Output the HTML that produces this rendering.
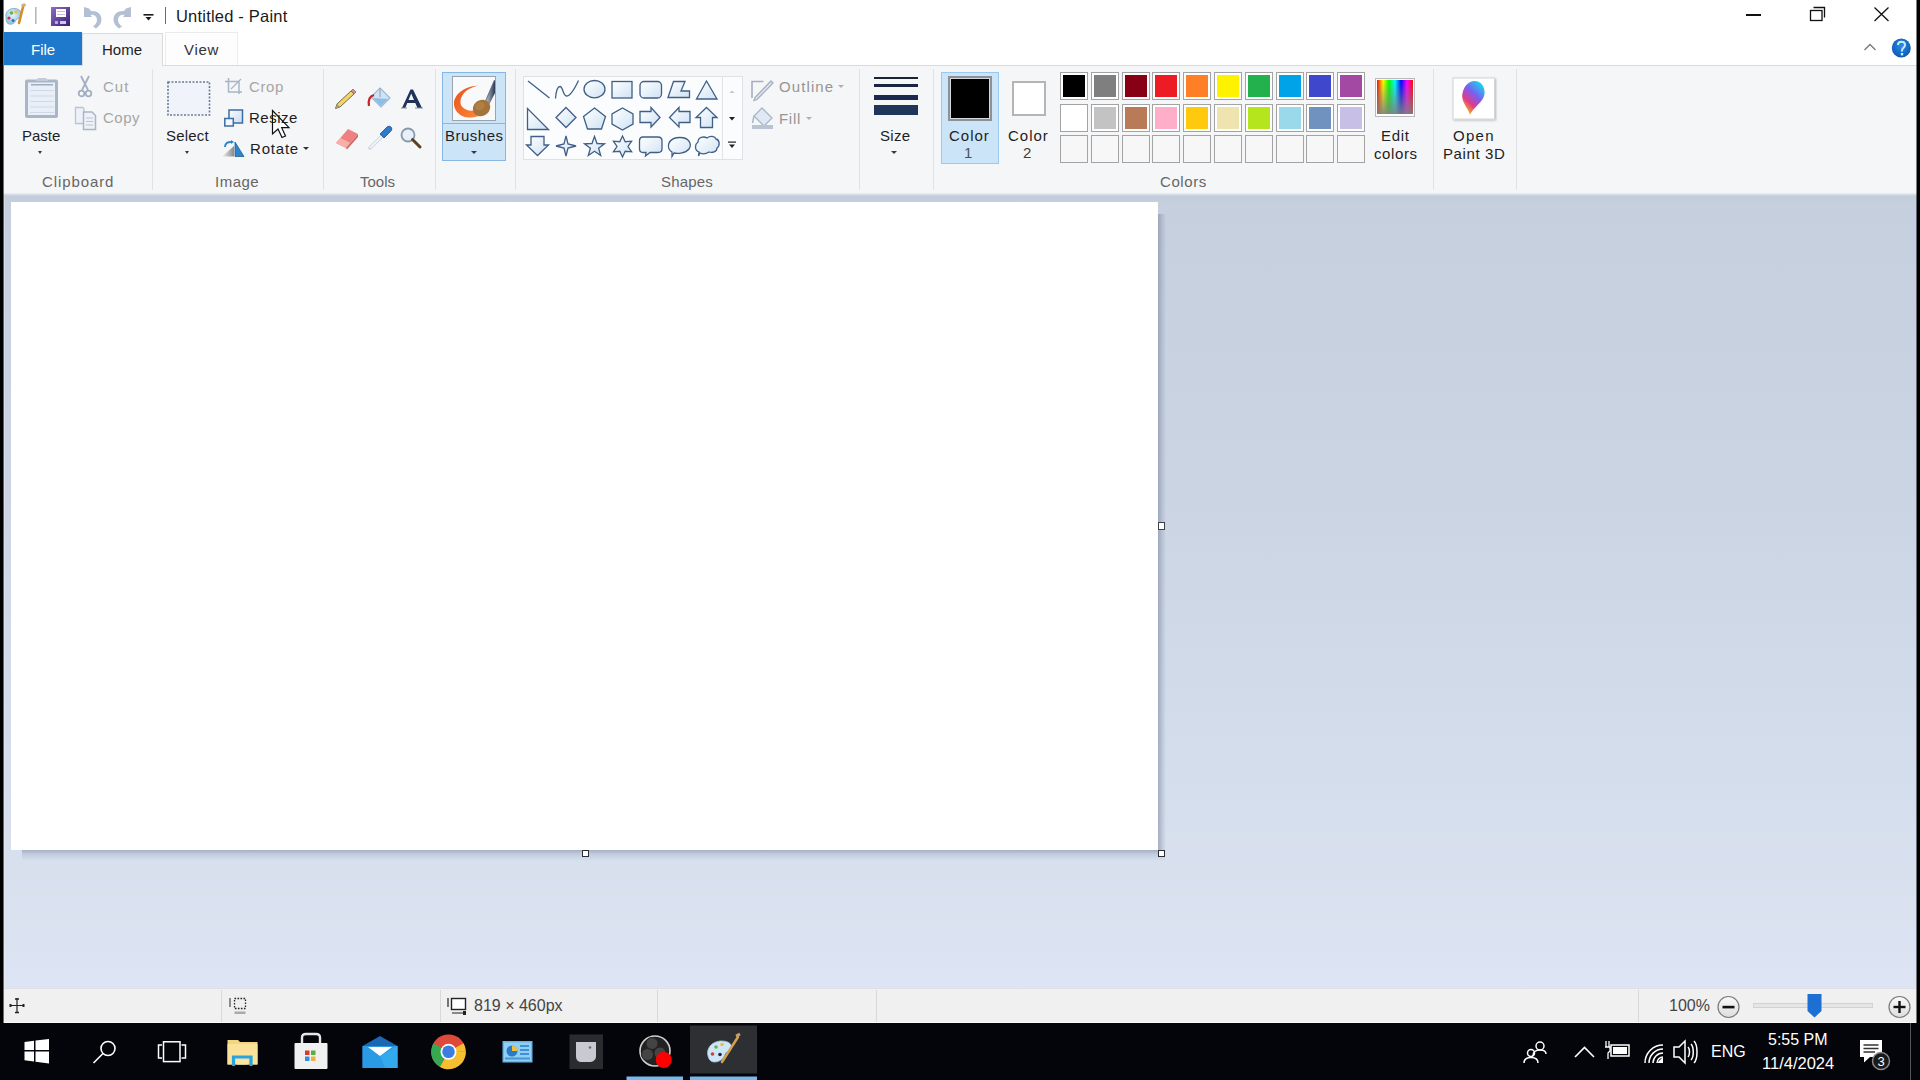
<!DOCTYPE html>
<html><head><meta charset="utf-8">
<style>
*{margin:0;padding:0;box-sizing:border-box}
html,body{width:1920px;height:1080px;overflow:hidden;background:#000;font-family:"Liberation Sans",sans-serif;color:#1e1e1e;position:relative}
.a{position:absolute}
.t{position:absolute;white-space:nowrap;font-size:15px;line-height:17px}
.lbl{color:#666}
.dis{color:#a6a6a6}
.sep{position:absolute;top:69px;width:1px;height:121px;background:#e1e2e4}
.sw{position:absolute;width:28px;height:28px;border:1px solid #a3a3a3;background:#fff}
.sw i{position:absolute;left:2px;top:2px;right:2px;bottom:2px;display:block}
.dd{position:absolute;width:0;height:0;border-left:3px solid transparent;border-right:3px solid transparent;border-top:3px solid #3a3a3a}
svg{position:absolute;overflow:visible}
</style></head><body>
<!-- window frame -->
<div class="a" style="left:3px;top:0;width:1914px;height:32px;background:#fff"></div>
<div class="a" style="left:3px;top:32px;width:1914px;height:33px;background:#fff"></div>
<div class="a" style="left:3px;top:65px;width:1914px;height:128px;background:#f5f6f7;border-top:1px solid #dadbdc"></div>
<div class="a" style="left:3px;top:193px;width:1914px;height:795px;background:linear-gradient(#eef0f4 0px,#c3ccda 3px,#c6cfde 10px,#cbd4e2 300px,#d5deec 600px,#dde4f3 795px)"></div>
<div class="a" style="left:3px;top:988px;width:1914px;height:35px;background:#f0f0f0;border-top:1px solid #dde1e6"></div>
<div class="a" style="left:0;top:1023px;width:1920px;height:57px;background:#04050a"></div>

<div class="a" style="left:4px;top:196px;width:1px;height:792px;background:rgba(255,255,255,.25)"></div>
<div class="a" style="left:4px;top:1022px;width:1913px;height:1px;background:#fafafa"></div>
<!-- canvas -->
<div class="a" style="left:22px;top:850px;width:1143px;height:11px;background:linear-gradient(rgba(120,135,160,.55),rgba(140,155,180,.3) 4px,rgba(160,175,200,0) 11px)"></div>
<div class="a" style="left:1158px;top:214px;width:8px;height:642px;background:linear-gradient(90deg,rgba(110,125,150,.5),rgba(130,145,170,.3) 4px,rgba(160,175,200,0) 8px)"></div>
<div class="a" style="left:11px;top:202px;width:1147px;height:648px;background:#fff"></div>
<div class="a" style="left:1158px;top:522px;width:7px;height:8px;border:1.5px solid #3d4148;background:#fff"></div>
<div class="a" style="left:582px;top:850px;width:7px;height:7px;border:1.5px solid #2a2d33;background:#fff"></div>
<div class="a" style="left:1158px;top:850px;width:7px;height:7px;border:1.5px solid #2a2d33;background:#fff"></div>

<div class="a" style="left:3px;top:0;width:1px;height:1023px;background:rgba(0,0,0,.55)"></div>
<div class="a" style="left:1916px;top:0;width:1px;height:1023px;background:rgba(0,0,0,.5)"></div>
<!-- title bar -->
<div class="t" style="left:176px;top:7px;font-size:16.5px;line-height:19px;letter-spacing:0.2px;color:#1a1a1a">Untitled - Paint</div>


<!-- title bar icons -->
<svg style="left:0;top:0" width="40" height="32" viewBox="0 0 40 32">
  <defs><radialGradient id="pg" cx="0.45" cy="0.4" r="0.6"><stop offset="0" stop-color="#e8f4fb"/><stop offset="1" stop-color="#8fc0e0"/></radialGradient></defs>
  <path d="M6 17 C5 11 10 8 15 8.5 C20 9 22 12 21 16 C20 19 17 18 16 20 C15 23 12 25 9 24 C6 23 6 20 6 17Z" fill="url(#pg)" stroke="#7aaad0" stroke-width="0.8"/>
  <circle cx="9" cy="18" r="1.6" fill="#d03030"/>
  <circle cx="11.5" cy="13" r="1.8" fill="#6ab04c"/>
  <circle cx="16" cy="12" r="1.8" fill="#e8c040"/>
  <circle cx="13" cy="20.5" r="1.5" fill="#3070c0"/>
  <path d="M19 23 L23 7" stroke="#d0902a" stroke-width="2.6" stroke-linecap="round"/>
  <path d="M21.5 6 L24 4.5 L25.5 6" stroke="#d8b080" stroke-width="2.5" fill="none"/>
  <rect x="35" y="7" width="1.6" height="17" fill="#b8b8b8"/>
</svg>
<svg style="left:50px;top:6px" width="22" height="22" viewBox="0 0 22 22">
  <defs><linearGradient id="fl" x1="0" y1="0" x2="1" y2="1"><stop offset="0" stop-color="#8f6cc8"/><stop offset="1" stop-color="#3a1f70"/></linearGradient></defs>
  <rect x="1" y="1" width="19" height="19" fill="url(#fl)"/>
  <rect x="6" y="3" width="10" height="8" fill="#fff"/>
  <rect x="7" y="5" width="8" height="1" fill="#c8c0e0"/><rect x="7" y="8" width="8" height="1" fill="#c8c0e0"/>
  <rect x="5" y="15" width="3" height="3" fill="#b8a8e8"/><rect x="10" y="15" width="6" height="3" fill="#d0c8e8"/>
</svg>
<svg style="left:80px;top:4px" width="60" height="26" viewBox="0 0 60 26">
  <path d="M4 3 L4 13 L12 13 L10.5 11 C14 10 17 12.5 17 16 C17 19 15 21 13 22.5 L16 24.5 C19.5 22 21.5 19 21.5 15.5 C21.5 10 17 6.5 11 7 L9 4.5Z" fill="#b3bfd3"/>
  <path d="M51 3 L51 13 L43 13 L44.5 11 C41 10 38 12.5 38 16 C38 19 40 21 42 22.5 L39 24.5 C35.5 22 33.5 19 33.5 15.5 C33.5 10 38 6.5 44 7 L46 4.5Z" fill="#b3bfd3"/>
</svg>
<svg style="left:140px;top:10px" width="30" height="18" viewBox="0 0 30 18">
  <rect x="3.5" y="4" width="10" height="1.6" fill="#1a1a1a"/>
  <path d="M5.5 7 L11.5 7 L8.5 10.5Z" fill="#1a1a1a"/>
  <rect x="25" y="-3" width="1" height="17" fill="#6a6a6a"/>
</svg>
<!-- window controls -->
<div class="a" style="left:1746px;top:14px;width:15px;height:1.5px;background:#111"></div>
<svg style="left:1805px;top:4px" width="24" height="20" viewBox="0 0 24 20">
  <rect x="5.5" y="6.5" width="11.5" height="10" fill="none" stroke="#111" stroke-width="1.3"/>
  <path d="M8.5 3.5 L19.5 3.5 L19.5 13.5" fill="none" stroke="#111" stroke-width="1.3"/>
</svg>
<svg style="left:1870px;top:4px" width="24" height="20" viewBox="0 0 24 20">
  <path d="M4.5 3.5 L18.5 17 M18.5 3.5 L4.5 17" stroke="#111" stroke-width="1.3"/>
</svg>
<!-- ribbon minimize caret + help -->
<svg style="left:1860px;top:40px" width="60" height="22" viewBox="0 0 60 22">
  <path d="M4.5 10 L10 4.5 L15.5 10" fill="none" stroke="#777" stroke-width="1.3"/>
  <defs><radialGradient id="hg" cx="0.5" cy="0.4" r="0.6"><stop offset="0" stop-color="#2f8ae6"/><stop offset="1" stop-color="#0c58b4"/></radialGradient></defs>
  <circle cx="41.3" cy="8" r="9.5" fill="url(#hg)"/>
  <path d="M38 5 C38 2.5 40 1.8 41.5 1.8 C43.5 1.8 45 3 45 5 C45 7.5 42 8 42 10.5 L42 11.5" fill="none" stroke="#bff0ff" stroke-width="2"/>
  <rect x="40.8" y="13" width="2.4" height="2.4" fill="#bff0ff"/>
</svg>

<!-- tabs -->
<div class="a" style="left:4px;top:32px;width:78px;height:33px;background:#1e79cd"></div>
<div class="t" style="left:31px;top:41px;color:#fff;font-size:15px">File</div>
<div class="a" style="left:82px;top:33px;width:81px;height:33px;background:#f5f6f7;border:1px solid #dadbdc;border-bottom:none"></div>
<div class="t" style="left:102px;top:41px">Home</div>
<div class="a" style="left:165px;top:32px;width:73px;height:33px;background:#fdfdfd;border:1px solid #ebebeb;border-bottom:none"></div>
<div class="t" style="left:184px;top:41px;color:#333;letter-spacing:0.7px">View</div>


<!-- clipboard icons -->
<svg style="left:22px;top:74px" width="40" height="48" viewBox="0 0 40 48">
  <rect x="3" y="5.5" width="33" height="38.5" rx="2" fill="#a9b6c8"/>
  <rect x="6" y="8.5" width="27" height="32.5" fill="#e9eff8"/>
  <rect x="9" y="10" width="22" height="1.5" fill="#a0acbe"/>
  <rect x="8" y="16" width="24" height="1" fill="#cfd8e4"/>
  <rect x="8" y="21.5" width="24" height="1" fill="#cfd8e4"/>
  <rect x="8" y="27" width="24" height="1" fill="#cfd8e4"/>
  <rect x="8" y="32.5" width="24" height="1" fill="#cfd8e4"/>
  <rect x="8" y="38" width="24" height="1" fill="#cfd8e4"/>
  <path d="M14 7 L16 4 L24 4 L26 7Z" fill="#c2ccda"/>
</svg>
<div class="dd" style="left:38px;top:151px;border-left-width:2.5px;border-right-width:2.5px"></div>
<svg style="left:76px;top:74px" width="20" height="26" viewBox="0 0 20 26">
  <path d="M5 2 L12 16 M13 2 L6 16" stroke="#a3afc2" stroke-width="1.8"/>
  <circle cx="5.5" cy="19.5" r="2.8" fill="none" stroke="#a3afc2" stroke-width="1.8"/>
  <circle cx="12.5" cy="19.5" r="2.8" fill="none" stroke="#a3afc2" stroke-width="1.8"/>
</svg>
<svg style="left:74px;top:105px" width="26" height="28" viewBox="0 0 26 28">
  <path d="M1.5 2.5 L9 2.5 L10 4 L10 18.5 L1.5 18.5Z" fill="#eef2f8" stroke="#b9c4d4" stroke-width="1.3"/>
  <path d="M9.5 7 L18 7 L21.5 10.5 L21.5 24.5 L9.5 24.5Z" fill="#eef2f8" stroke="#aab6c8" stroke-width="1.5"/>
  <path d="M12 13 L19 13 M12 16.5 L19 16.5 M12 20 L19 20" stroke="#b9c4d4" stroke-width="1.2"/>
</svg>
<!-- select -->
<svg style="left:165px;top:79px" width="48" height="40" viewBox="0 0 48 40">
  <rect x="3" y="3" width="41.5" height="33" fill="#f0f4fa" stroke="#6a7b98" stroke-width="1.6" stroke-dasharray="2 1.5"/>
</svg>
<div class="dd" style="left:185px;top:151px;border-left-width:2.5px;border-right-width:2.5px"></div>
<!-- crop -->
<svg style="left:222px;top:75px" width="24" height="24" viewBox="0 0 24 24">
  <path d="M3 6.5 L17 6.5 L17 19 M6.5 3 L6.5 17 L20 17" fill="none" stroke="#a9b5c8" stroke-width="1.5"/>
  <path d="M9 14 L19 4" stroke="#a9b5c8" stroke-width="1.2"/>
</svg>
<!-- resize -->
<svg style="left:222px;top:107px" width="24" height="22" viewBox="0 0 24 22">
  <defs><linearGradient id="rz" x1="0" y1="0" x2="1" y2="1"><stop offset="0" stop-color="#fafcff"/><stop offset="1" stop-color="#c8dcf0"/></linearGradient></defs>
  <rect x="7" y="3" width="13.5" height="13" fill="url(#rz)" stroke="#3b6ea5" stroke-width="1.5"/>
  <rect x="2.8" y="11.5" width="8.5" height="7.5" fill="#f4f8fc" stroke="#3b6ea5" stroke-width="1.5"/>
</svg>
<!-- rotate -->
<svg style="left:220px;top:138px" width="28" height="22" viewBox="0 0 28 22">
  <defs><linearGradient id="rt" x1="0" y1="0" x2="1" y2="0"><stop offset="0" stop-color="#f0f0f0"/><stop offset="1" stop-color="#8a8a8a"/></linearGradient></defs>
  <path d="M2 18.5 L14 18.5 L14 8Z" fill="url(#rt)"/>
  <path d="M15 4 L15 18.5 L24 18.5Z" fill="#2e86c8" stroke="#1f5f98" stroke-width="0.8"/>
  <path d="M5 9 C5 5 8 3.5 12 4" fill="none" stroke="#2e86c8" stroke-width="2"/>
  <path d="M11 2 L14 4 L11 6Z" fill="#2e86c8"/>
</svg>
<div class="dd" style="left:303px;top:147px;border-left-width:3px;border-right-width:3px;border-top-width:3.5px;border-top-color:#333"></div>
<!-- cursor -->
<svg style="left:271px;top:109px" width="24" height="32" viewBox="0 0 24 32">
  <path d="M1.5 1.5 L1.5 25 L7 20 L11 28.5 L14.5 27 L10.7 18.7 L18 18.7Z" fill="#fff" stroke="#111" stroke-width="1.2" stroke-linejoin="miter"/>
</svg>
<!-- tools -->
<svg style="left:330px;top:84px" width="100" height="72" viewBox="0 0 100 72">
  <!-- pencil -->
  <path d="M5.5 24.5 L7 20 L21 7 L24 10 L10 23Z" fill="#f1d46a" stroke="#6b5a3a" stroke-width="0.9"/>
  <path d="M5.5 24.5 L7 20 L10 23Z" fill="#a89888"/>
  <path d="M21 7 L23 5 L26 8 L24 10Z" fill="#d09090" stroke="#8a5a5a" stroke-width="0.7"/>
  <!-- bucket -->
  <path d="M50 4 L60 14 L51 23 L41 13Z" fill="#cfe3f6" stroke="#9bb8d8" stroke-width="1.2"/>
  <path d="M43 14 L51 22 L58 15Z" fill="#8ebce6"/>
  <path d="M50 4 L50 13" stroke="#9aa8b8" stroke-width="1.2"/>
  <path d="M39 22 C38 16 40 12 44 11" fill="none" stroke="#c0282a" stroke-width="2.2"/>
  <!-- A -->
  <path d="M72 24 L80.5 5.5 L83 5.5 L92 24 L87.5 24 L85.3 19 L77.3 19 L75.2 24Z M78.5 16 L84 16 L81.2 9.5Z" fill="#1f3358" fill-rule="evenodd"/>
  <path d="M71 24 L77 24 M85 24 L93 24" stroke="#8090a8" stroke-width="1.2"/>
  <!-- eraser -->
  <path d="M6 59 L18 45 L28 50 L16 64Z" fill="#f07f82"/>
  <path d="M6 59 L10.5 54 L20.5 59 L16 64Z" fill="#f7b0a8"/>
  <path d="M16 64 L28 50 L28 53 L17 65.5Z" fill="#d06868"/>
  <!-- picker -->
  <path d="M40 64 L52 52" stroke="#c8d4e0" stroke-width="3.5" stroke-linecap="round"/>
  <path d="M40 64 L52 52" stroke="#eef4fa" stroke-width="1.8"/>
  <path d="M50 50 L57 43 C58 42 60 42 61 43 C62 44 62 46 61 47 L54 54Z" fill="#2f7acb" stroke="#1b4f8c" stroke-width="0.8"/>
  <!-- magnifier -->
  <circle cx="78" cy="51" r="6.5" fill="#e6f0fb" stroke="#8a98a8" stroke-width="1.8"/>
  <path d="M82.5 55.5 L90 63" stroke="#5a4020" stroke-width="3" stroke-linecap="round"/>
</svg>
<!-- ribbon separators -->
<div class="sep" style="left:152px"></div>
<div class="sep" style="left:323px"></div>
<div class="sep" style="left:435px"></div>
<div class="sep" style="left:515px"></div>
<div class="sep" style="left:859px"></div>
<div class="sep" style="left:933px"></div>
<div class="sep" style="left:1433px"></div>
<div class="sep" style="left:1516px"></div>

<!-- group labels -->
<div class="t lbl" style="left:42px;top:173px;letter-spacing:0.9px">Clipboard</div>
<div class="t lbl" style="left:215px;top:173px;letter-spacing:0.5px">Image</div>
<div class="t lbl" style="left:360px;top:173px;letter-spacing:0px">Tools</div>
<div class="t lbl" style="left:661px;top:173px;letter-spacing:0.2px">Shapes</div>
<div class="t lbl" style="left:1160px;top:173px;letter-spacing:0.6px">Colors</div>

<!-- clipboard -->
<div class="t" style="left:22px;top:127px;letter-spacing:0px">Paste</div>

<div class="t dis" style="left:103px;top:78px;letter-spacing:1.0px">Cut</div>
<div class="t dis" style="left:103px;top:109px;letter-spacing:0.5px">Copy</div>

<!-- image -->
<div class="t" style="left:166px;top:127px;letter-spacing:0.2px">Select</div>

<div class="t dis" style="left:249px;top:78px;letter-spacing:0.6px">Crop</div>
<div class="t" style="left:249px;top:109px;letter-spacing:0.5px">Resize</div>
<div class="t" style="left:250px;top:140px;letter-spacing:0.8px">Rotate</div>


<!-- brushes -->
<div class="a" style="left:442px;top:72px;width:64px;height:89px;background:#cce4f7;border:1px solid #86b7e4"></div>
<div class="a" style="left:443px;top:123px;width:62px;height:1px;background:#86b7e4"></div>

<!-- brushes icon -->
<svg style="left:452px;top:76px" width="44" height="45" viewBox="0 0 44 45">
  <defs>
    <linearGradient id="or" x1="0" y1="0" x2="1" y2="1"><stop offset="0" stop-color="#e8501a"/><stop offset="1" stop-color="#ff8a3a"/></linearGradient>
    <linearGradient id="hd" x1="0" y1="0" x2="1" y2="0"><stop offset="0" stop-color="#c8d0dc"/><stop offset="1" stop-color="#2a3850"/></linearGradient>
  </defs>
  <rect x="0.5" y="0.5" width="43" height="44" fill="#f7f9fb" stroke="#9aa3ae" stroke-width="1"/>
  <path d="M26 9.5 C17 10 4 15 2 26 C1 34 8 41.5 17 41.5 C23 41.5 28 40 30.5 38 L27 33 C21 36 13 35 9.5 30 C7 25.5 9 17.5 17 13 C20 11.5 23 10.5 26 9.5Z" fill="url(#or)"/>
  <path d="M33 26 L42.5 4 L43 4.5 L43 17 L37 29Z" fill="url(#hd)"/>
  <path d="M33.5 25 L42.5 4" stroke="#5a6880" stroke-width="0.9"/>
  <ellipse cx="29.5" cy="32" rx="9" ry="8" transform="rotate(-35 29.5 32)" fill="#a5733a"/>
  <ellipse cx="28" cy="30" rx="5" ry="4" transform="rotate(-35 28 30)" fill="#b8874a" opacity="0.6"/>
</svg>

<div class="t" style="left:445px;top:127px;letter-spacing:0.5px">Brushes</div>
<div class="dd" style="left:471px;top:151px"></div>

<!-- shapes gallery -->
<div class="a" style="left:523px;top:76px;width:220px;height:84px;background:#fbfcfd;border:1px solid #dfe1e4"></div>
<div class="a" style="left:722px;top:77px;width:1px;height:82px;background:#e2e4e6"></div>
<div class="t dis" style="left:779px;top:78px;letter-spacing:1.1px;color:#959595">Outline</div>
<div class="dd" style="left:838px;top:85px;border-top-color:#b0b0b0"></div>
<div class="t dis" style="left:779px;top:110px;letter-spacing:0.7px;color:#959595">Fill</div>
<div class="dd" style="left:806px;top:117px;border-top-color:#b0b0b0"></div>


<!-- shapes -->
<svg style="left:522px;top:74px" width="222" height="88" viewBox="0 0 222 88">
  <defs><linearGradient id="sg" x1="0" y1="0" x2="1" y2="1"><stop offset="0" stop-color="#ffffff"/><stop offset="1" stop-color="#cfe2f4"/></linearGradient></defs>
  <path d="M6 7 L27.5 24" stroke="#3f5f86" stroke-width="1.3"/>
  <path d="M33.5 24.5 C34 18 35.5 12.5 38 12.5 C41 12.5 41 22 44.5 22 C49 22 53 14 56.5 6.5" fill="none" stroke="#3f5f86" stroke-width="1.3"/>
  <ellipse cx="72.5" cy="15.2" rx="10.5" ry="8.7" fill="url(#sg)" stroke="#3f5f86" stroke-width="1.3" stroke-linejoin="miter"/>
  <rect x="90" y="7.5" width="20" height="16.5" fill="url(#sg)" stroke="#3f5f86" stroke-width="1.3" stroke-linejoin="miter"/>
  <rect x="118" y="7.5" width="21.5" height="16.5" rx="4" fill="url(#sg)" stroke="#3f5f86" stroke-width="1.3" stroke-linejoin="miter"/>
  <polygon points="146,23.5 151.5,7.5 163,7.5 159,17 167.5,17 167.5,23.5" fill="url(#sg)" stroke="#3f5f86" stroke-width="1.3" stroke-linejoin="miter"/>
  <polygon points="184.5,7 174.5,25 195,25" fill="url(#sg)" stroke="#3f5f86" stroke-width="1.3" stroke-linejoin="miter"/>

  <polygon points="5.5,34.5 5.5,55.5 26.5,55.5" fill="url(#sg)" stroke="#3f5f86" stroke-width="1.3" stroke-linejoin="miter"/>
  <polygon points="44,33.5 54,43.5 44,53.5 34,43.5" fill="url(#sg)" stroke="#3f5f86" stroke-width="1.3" stroke-linejoin="miter"/>
  <polygon points="72.5,34 83.5,42.5 79.5,55 65.5,55 61.5,42.5" fill="url(#sg)" stroke="#3f5f86" stroke-width="1.3" stroke-linejoin="miter"/>
  <polygon points="100.5,34 111,40 111,50 100.5,56 90,50 90,40" fill="url(#sg)" stroke="#3f5f86" stroke-width="1.3" stroke-linejoin="miter"/>
  <polygon points="118,37.5 129,37.5 129,33.5 138,43.5 129,53 129,48.5 118,48.5" fill="url(#sg)" stroke="#3f5f86" stroke-width="1.3" stroke-linejoin="miter"/>
  <polygon points="168,37.5 157,37.5 157,33.5 147.5,43.5 157,53 157,48.5 168,48.5" fill="url(#sg)" stroke="#3f5f86" stroke-width="1.3" stroke-linejoin="miter"/>
  <polygon points="184.5,33.5 195,43.5 190.5,43.5 190.5,53.5 178.5,53.5 178.5,43.5 174,43.5" fill="url(#sg)" stroke="#3f5f86" stroke-width="1.3" stroke-linejoin="miter"/>

  <polygon points="9,62.5 22,62.5 22,71 26.5,71 15.5,81.5 4.5,71 9,71" fill="url(#sg)" stroke="#3f5f86" stroke-width="1.3" stroke-linejoin="miter"/>
  <polygon points="44.0,62.0 46.0,70.0 54.0,72.0 46.0,74.0 44.0,82.0 42.0,74.0 34.0,72.0 42.0,70.0" fill="url(#sg)" stroke="#3f5f86" stroke-width="1.3" stroke-linejoin="miter"/>
  <polygon points="72.5,62.5 75.0,69.5 82.5,69.8 76.6,74.3 78.7,81.5 72.5,77.3 66.3,81.5 68.4,74.3 62.5,69.8 70.0,69.5" fill="url(#sg)" stroke="#3f5f86" stroke-width="1.3" stroke-linejoin="miter"/>
  <polygon points="100.5,62.0 103.2,67.7 109.6,67.2 106.0,72.5 109.6,77.8 103.2,77.3 100.5,83.0 97.8,77.3 91.4,77.8 95.0,72.5 91.4,67.2 97.8,67.7" fill="url(#sg)" stroke="#3f5f86" stroke-width="1.3" stroke-linejoin="miter"/>
  <path d="M121 63 L136 63 Q140 63 140 67 L140 74.5 Q140 78.5 136 78.5 L128 78.5 L123.5 82 L124 78.5 L121 78.5 Q117.5 78.5 117.5 74.5 L117.5 67 Q117.5 63 121 63Z" fill="url(#sg)" stroke="#3f5f86" stroke-width="1.3" stroke-linejoin="miter"/>
  <path d="M150 78 C144 75 145 64 157 63.5 C168 63 170 71 167 75 C164 79 156 80 152 79 L150 82.5Z" fill="url(#sg)" stroke="#3f5f86" stroke-width="1.3" stroke-linejoin="miter"/>
  <path d="M177 78 C172 76 173 70 176 68 C176 63 182 62 185 64 C188 61.5 193 62 194 65 C198 66 198 72 195 74 C195 78 190 79 187 78 C184 80 180 80 178 79 L176.5 82Z" fill="url(#sg)" stroke="#3f5f86" stroke-width="1.3" stroke-linejoin="miter"/>

  <path d="M207.5 19 L210 16.5 L212.5 19Z" fill="#c0c4c8"/>
  <path d="M207 43 L213 43 L210 46.5Z" fill="#222"/>
  <rect x="206" y="67.5" width="8" height="1.2" fill="#222"/>
  <path d="M207 70.5 L213 70.5 L210 74Z" fill="#222"/>
</svg>
<!-- outline / fill icons -->
<svg style="left:748px;top:76px" width="30" height="56" viewBox="0 0 30 56">
  <path d="M15.5 5.5 L4 5.5 L4 22" fill="none" stroke="#a6afbf" stroke-width="1.6"/>
  <path d="M7 21.5 L23 5 L25 7 L9 23.5 L6 24.5Z" fill="#dde6f2" stroke="#a6afbf" stroke-width="1.3"/>
  <path d="M14 32 L24 42 L16 50 L6 40Z" fill="#dfe9f6" stroke="#aab6c8" stroke-width="1.3"/>
  <path d="M6 40 L4.5 47" stroke="#aab6c8" stroke-width="1.5"/>
  <rect x="4" y="49" width="21" height="4" fill="#b8c3d4"/>
</svg>

<!-- size -->
<div class="a" style="left:874px;top:77px;width:44px;height:2px;background:#1b2433"></div>
<div class="a" style="left:874px;top:84px;width:44px;height:3px;background:#1b2540"></div>
<div class="a" style="left:874px;top:95px;width:44px;height:5px;background:#1b2a4c"></div>
<div class="a" style="left:874px;top:105px;width:44px;height:10px;background:#1f3559"></div>
<div class="t" style="left:880px;top:127px;letter-spacing:0.3px">Size</div>
<div class="dd" style="left:891px;top:151px"></div>

<!-- color1/2 -->
<div class="a" style="left:941px;top:72px;width:58px;height:92px;background:#cce4f7;border:1px solid #99c9ef"></div>
<div class="a" style="left:948px;top:76px;width:44px;height:45px;border:2px solid #8c9197;background:#d4d8dc"></div>
<div class="a" style="left:951px;top:79px;width:38px;height:39px;background:#000"></div>
<div class="t" style="left:949px;top:127px;letter-spacing:1.0px">Color</div>
<div class="t" style="left:964px;top:144px;color:#505050">1</div>
<div class="a" style="left:1012px;top:81px;width:34px;height:35px;border:2px solid #b5b5b5;background:#fff"></div>
<div class="t" style="left:1008px;top:127px;letter-spacing:1.0px">Color</div>
<div class="t" style="left:1023px;top:144px;color:#404040">2</div>

<div class="sw" style="left:1060px;top:72px"><i style="background:#000000"></i></div>
<div class="sw" style="left:1091px;top:72px"><i style="background:#7f7f7f"></i></div>
<div class="sw" style="left:1122px;top:72px"><i style="background:#880015"></i></div>
<div class="sw" style="left:1152px;top:72px"><i style="background:#ed1c24"></i></div>
<div class="sw" style="left:1183px;top:72px"><i style="background:#ff7f27"></i></div>
<div class="sw" style="left:1214px;top:72px"><i style="background:#fff200"></i></div>
<div class="sw" style="left:1245px;top:72px"><i style="background:#22b14c"></i></div>
<div class="sw" style="left:1276px;top:72px"><i style="background:#00a2e8"></i></div>
<div class="sw" style="left:1306px;top:72px"><i style="background:#3f48cc"></i></div>
<div class="sw" style="left:1337px;top:72px"><i style="background:#a349a4"></i></div>
<div class="sw" style="left:1060px;top:104px"><i style="background:#ffffff"></i></div>
<div class="sw" style="left:1091px;top:104px"><i style="background:#c3c3c3"></i></div>
<div class="sw" style="left:1122px;top:104px"><i style="background:#b97a57"></i></div>
<div class="sw" style="left:1152px;top:104px"><i style="background:#ffaec9"></i></div>
<div class="sw" style="left:1183px;top:104px"><i style="background:#ffc90e"></i></div>
<div class="sw" style="left:1214px;top:104px"><i style="background:#efe4b0"></i></div>
<div class="sw" style="left:1245px;top:104px"><i style="background:#b5e61d"></i></div>
<div class="sw" style="left:1276px;top:104px"><i style="background:#99d9ea"></i></div>
<div class="sw" style="left:1306px;top:104px"><i style="background:#7092be"></i></div>
<div class="sw" style="left:1337px;top:104px"><i style="background:#c8bfe7"></i></div>
<div class="sw" style="left:1060px;top:135px;background:#f7f7f8"></div>
<div class="sw" style="left:1091px;top:135px;background:#f7f7f8"></div>
<div class="sw" style="left:1122px;top:135px;background:#f7f7f8"></div>
<div class="sw" style="left:1152px;top:135px;background:#f7f7f8"></div>
<div class="sw" style="left:1183px;top:135px;background:#f7f7f8"></div>
<div class="sw" style="left:1214px;top:135px;background:#f7f7f8"></div>
<div class="sw" style="left:1245px;top:135px;background:#f7f7f8"></div>
<div class="sw" style="left:1276px;top:135px;background:#f7f7f8"></div>
<div class="sw" style="left:1306px;top:135px;background:#f7f7f8"></div>
<div class="sw" style="left:1337px;top:135px;background:#f7f7f8"></div>

<!-- edit colors -->
<div class="a" style="left:1375px;top:78px;width:40px;height:39px;border:1px solid #b9b9b9;background:#fff"></div>
<div class="a" style="left:1377px;top:80px;width:36px;height:34px;background:linear-gradient(rgba(128,128,128,0),rgba(128,128,128,.9)),linear-gradient(90deg,#f00,#ff0 17%,#0f0 33%,#0ff 50%,#00f 67%,#f0f 83%,#f00)"></div>
<div class="t" style="left:1381px;top:127px;letter-spacing:0.7px">Edit</div>
<div class="t" style="left:1374px;top:145px;letter-spacing:0.6px">colors</div>

<!-- paint 3d -->

<svg style="left:1452px;top:77px" width="46" height="46" viewBox="0 0 46 46">
  <defs>
    <linearGradient id="p3" x1="0.8" y1="0.1" x2="0.3" y2="0.9"><stop offset="0" stop-color="#22c8f0"/><stop offset="0.4" stop-color="#7a5ef0"/><stop offset="0.75" stop-color="#e03a8a"/><stop offset="1" stop-color="#f09a30"/></linearGradient>
    <filter id="sh" x="-10%" y="-10%" width="130%" height="130%"><feDropShadow dx="1" dy="1" stdDeviation="0.8" flood-color="#000" flood-opacity="0.25"/></filter>
  </defs>
  <rect x="1" y="1" width="41.5" height="41" fill="#fff" stroke="#d4d4d4" stroke-width="1" filter="url(#sh)"/>
  <path d="M18 38 C17 33 12 28 10.5 22 C9 15 13.5 5 21.5 4 C29 3.5 33.5 10 32.5 17 C31.5 24 25 28 21 33 C19.5 35 18.5 36.5 18 38Z" fill="url(#p3)"/>
</svg>

<div class="t" style="left:1453px;top:127px;letter-spacing:1.3px">Open</div>
<div class="t" style="left:1443px;top:145px;letter-spacing:0.6px">Paint 3D</div>

<!-- status bar -->
<div class="a" style="left:221px;top:990px;width:1px;height:32px;background:#d9d9d9"></div>
<div class="a" style="left:440px;top:990px;width:1px;height:32px;background:#d9d9d9"></div>
<div class="a" style="left:657px;top:990px;width:1px;height:32px;background:#d9d9d9"></div>
<div class="a" style="left:876px;top:990px;width:1px;height:32px;background:#d9d9d9"></div>
<div class="a" style="left:1638px;top:990px;width:1px;height:32px;background:#d9d9d9"></div>
<div class="t" style="left:474px;top:997px;font-size:16px;line-height:18px;color:#444">819 × 460px</div>
<div class="t" style="left:1669px;top:997px;font-size:16px;line-height:18px;color:#444">100%</div>


<!-- status bar icons -->
<svg style="left:6px;top:995px" width="24" height="22" viewBox="0 0 24 22">
  <path d="M11 3 L11 18 M4 10.5 L18 10.5" stroke="#222" stroke-width="1.2"/>
  <path d="M9 4 L13 4 M9 17.5 L13 17.5" stroke="#222" stroke-width="1.5"/>
  <rect x="3.5" y="9" width="2" height="3" fill="#222"/><rect x="16.5" y="9" width="2" height="3" fill="#222"/>
</svg>
<svg style="left:226px;top:994px" width="26" height="24" viewBox="0 0 26 24">
  <path d="M4 4 L4 13" stroke="#555" stroke-width="1.3"/>
  <rect x="8.5" y="4.5" width="11" height="10" fill="none" stroke="#222" stroke-width="1.3" stroke-dasharray="1.6 1.4"/>
  <rect x="8.5" y="17.5" width="11" height="2.5" fill="#aaa"/>
</svg>
<svg style="left:444px;top:995px" width="26" height="24" viewBox="0 0 26 24">
  <path d="M4 3 L4 12" stroke="#333" stroke-width="1.3"/>
  <rect x="7.5" y="3.5" width="14" height="11" fill="#fff" stroke="#222" stroke-width="1.4"/>
  <rect x="8" y="17" width="14" height="2" fill="#888"/><rect x="19" y="16" width="3" height="4" fill="#222"/>
</svg>
<!-- zoom control -->
<svg style="left:1710px;top:990px" width="210" height="34" viewBox="0 0 210 34">
  <defs><linearGradient id="zc" x1="0" y1="0" x2="0" y2="1"><stop offset="0" stop-color="#fafafa"/><stop offset="1" stop-color="#dcdcdc"/></linearGradient></defs>
  <circle cx="18.5" cy="17" r="10.5" fill="url(#zc)" stroke="#7a7a7a" stroke-width="1.2"/>
  <rect x="12.5" y="15.8" width="12" height="2.6" fill="#111"/>
  <rect x="43.5" y="13.5" width="119" height="4" fill="#e6e6e6" stroke="#d2d2d2" stroke-width="1"/>
  <path d="M97.5 4 L111.5 4 L111.5 21 L104.5 27.5 L97.5 21Z" fill="#1d6fd4"/>
  <circle cx="189.5" cy="17" r="10.5" fill="url(#zc)" stroke="#7a7a7a" stroke-width="1.2"/>
  <rect x="183.5" y="15.8" width="12" height="2.4" fill="#111"/>
  <rect x="188.3" y="11" width="2.4" height="12" fill="#111"/>
</svg>

<!-- taskbar icons -->
<svg style="left:0;top:1023px" width="800" height="57" viewBox="0 0 800 57">
  <!-- windows logo -->
  <path d="M24.5 19 L34 17.8 L34 27 L24.5 27Z M35.5 17.6 L49 16 L49 27 L35.5 27Z M24.5 28.5 L34 28.5 L34 38.5 L24.5 37.3Z M35.5 28.5 L49 28.5 L49 40.5 L35.5 38.7Z" fill="#fff"/>
  <!-- search -->
  <circle cx="108" cy="25.5" r="7" fill="none" stroke="#fff" stroke-width="1.6"/>
  <path d="M103 30.5 L93.5 40" stroke="#fff" stroke-width="1.6"/>
  <!-- task view -->
  <rect x="163.5" y="18.8" width="16.5" height="19.8" fill="none" stroke="#fff" stroke-width="1.5"/>
  <path d="M162 22 L158.5 22 L158.5 35 L162 35 M181.5 22 L185.5 22 L185.5 35 L181.5 35" fill="none" stroke="#fff" stroke-width="1.5"/>
  <!-- explorer -->
  <path d="M227.5 17 L238 17 L240 19 L257.5 19 L257.5 41.5 L227.5 41.5Z" fill="#f3d57a"/>
  <rect x="227.5" y="21" width="30" height="20.5" fill="#fbe29a"/>
  <path d="M233.5 43 L233.5 34 L251 34 L251 43" fill="none" stroke="#2ba3e0" stroke-width="3.2"/>
  <rect x="237" y="37" width="10.5" height="4.5" fill="#f7e7a8"/>
  <!-- store -->
  <path d="M302 20 L302 14.5 C302 12 304 11 306 11 L316 11 C318 11 320 12 320 14.5 L320 20" fill="none" stroke="#e6e6e6" stroke-width="2.4"/>
  <rect x="294.5" y="20" width="33" height="26" rx="1" fill="#f0f0f0"/>
  <rect x="305" y="27.5" width="4.5" height="4.5" fill="#d83a2a"/><rect x="311" y="27.5" width="4.5" height="4.5" fill="#5aac40"/>
  <rect x="305" y="33.5" width="4.5" height="4.5" fill="#2e90dc"/><rect x="311" y="33.5" width="4.5" height="4.5" fill="#ecb33a"/>
  <!-- mail -->
  <path d="M362.5 23 L380 13 L397.5 23 L397.5 45 L362.5 45Z" fill="#1a67b4"/>
  <path d="M362.5 23 L397.5 23 L397.5 45 L362.5 45Z" fill="#2a9ae4"/>
  <path d="M368 24 L392 24 L380 33Z" fill="#fff"/>
  <path d="M380 33 L397.5 23 L397.5 45 L385 45Z" fill="#38b0f0" opacity="0.7"/>
  <!-- chrome -->
  <circle cx="448.5" cy="28.8" r="17.3" fill="#de4a3a"/>
  <path d="M448.5 28.8 L433.5 20.2 A17.3 17.3 0 0 0 440 44 Z" fill="#36a852"/>
  <path d="M448.5 28.8 L440 44 A17.3 17.3 0 0 0 465.8 28.8 L457 28.8Z" fill="#f5c030"/>
  <path d="M448.5 28.8 L463.5 20.2 A17.3 17.3 0 0 1 465.8 28.8Z" fill="#f5c030"/>
  <circle cx="448.5" cy="28.8" r="8" fill="#fff"/>
  <circle cx="448.5" cy="28.8" r="6.3" fill="#3b7de0"/>
  <!-- control panel -->
  <rect x="502.5" y="18" width="30" height="21.5" fill="#62b8ea"/>
  <rect x="504" y="19.5" width="27" height="18.5" fill="#8fd0f4"/>
  <circle cx="512" cy="28" r="5.5" fill="#2a7ac8"/><path d="M512 28 L512 22.5 A5.5 5.5 0 0 1 517.5 28Z" fill="#f0c040"/>
  <path d="M520 23 L529 23 M520 27 L529 27 M520 31 L529 31" stroke="#2a7ac8" stroke-width="1.5"/>
  <rect x="505" y="34.5" width="25" height="2" fill="#2a7ac8" opacity=".7"/>
  <!-- grey app -->
  <rect x="569.5" y="11.5" width="33.5" height="34.5" fill="#2a2b2f"/>
  <path d="M576 19 L596 19 L596 33 C596 37 593 39 589 39 L582 39 C578 39 576 37 576 33Z" fill="#c9c9d2"/>
  <circle cx="590" cy="24.5" r="1.3" fill="#6a6a74"/>
  <!-- obs -->
  <circle cx="655" cy="28" r="15" fill="#222" stroke="#d0d0d0" stroke-width="1.6"/>
  <circle cx="652" cy="20.5" r="6" fill="#444" stroke="#222" stroke-width="1"/>
  <circle cx="647.5" cy="31.5" r="6" fill="#444" stroke="#222" stroke-width="1"/>
  <circle cx="660" cy="30" r="6" fill="#444" stroke="#222" stroke-width="1"/>
  <circle cx="663.8" cy="37" r="8" fill="#ff0000"/>
  <rect x="626.5" y="53.5" width="56.5" height="3.5" fill="#76b9ed"/>
  <!-- paint active -->
  <rect x="690" y="2.5" width="67" height="48" fill="#2e2f33"/>
  <rect x="690" y="53.5" width="67" height="3.5" fill="#76b9ed"/>
  <path d="M708 33 C706 26 711 19 720 18 C728 17.5 733 21 731 26 C730 29 726 28 725 31 C724 35 720 39 715 39 C711 39 709 37 708 33Z" fill="#cfe6f6" stroke="#9cc4e0" stroke-width="0.8"/>
  <circle cx="712.5" cy="31" r="1.8" fill="#d04030"/>
  <circle cx="716" cy="24" r="1.8" fill="#6ab04c"/>
  <circle cx="722" cy="21.5" r="1.8" fill="#e8c040"/>
  <circle cx="720" cy="31.5" r="1.8" fill="#1a2a40"/>
  <path d="M722 39 L738 14" stroke="#d4a050" stroke-width="2.5" stroke-linecap="round"/>
  <path d="M736 13 L740 11" stroke="#c8a070" stroke-width="3"/>
</svg>
<svg style="left:1500px;top:1023px" width="420" height="57" viewBox="0 0 420 57">
  <!-- people -->
  <circle cx="40" cy="23" r="4" fill="none" stroke="#fff" stroke-width="1.5"/>
  <path d="M33 33 C33 28 36 27 40 27 C44 27 46 28 46 31" fill="none" stroke="#fff" stroke-width="1.5"/>
  <circle cx="31" cy="30" r="3.5" fill="none" stroke="#fff" stroke-width="1.5"/>
  <path d="M24 40 C24 36 27 34.5 31 34.5 C35 34.5 38 36 38 40" fill="none" stroke="#fff" stroke-width="1.5"/>
  <!-- caret -->
  <path d="M75 34 L84.5 24.5 L94 34" fill="none" stroke="#fff" stroke-width="1.6"/>
  <!-- power -->
  <rect x="111" y="22" width="18" height="11" fill="none" stroke="#fff" stroke-width="1.5"/>
  <rect x="113" y="24" width="14" height="7" fill="#fff"/>
  <path d="M106 18 L106 24 M109 18 L109 24 M105 24 L110 24 L110 28 L108 30 L108 36" stroke="#fff" stroke-width="1.3" fill="none"/>
  <!-- wifi -->
  <path d="M145 40 A18 18 0 0 1 163 22" fill="none" stroke="#fff" stroke-width="1.5"/>
  <path d="M149 40 A14 14 0 0 1 163 26" fill="none" stroke="#fff" stroke-width="1.5"/>
  <path d="M153 40 A10 10 0 0 1 163 30" fill="none" stroke="#fff" stroke-width="1.5"/>
  <path d="M157 40 A6 6 0 0 1 163 34" fill="none" stroke="#fff" stroke-width="1.5"/>
  <path d="M157 40 L163 40 L163 34" fill="#fff"/>
  <!-- volume -->
  <path d="M174 24 L179 24 L185 18 L185 40 L179 34 L174 34Z" fill="none" stroke="#fff" stroke-width="1.5"/>
  <path d="M188 24 C190 26 190 32 188 34 M191 21 C194 24 194 34 191 37 M194 18 C198 22 198 36 194 40" fill="none" stroke="#fff" stroke-width="1.5"/>
  <!-- notification -->
  <path d="M360 17 L382 17 L382 34 L370 34 L364 39.5 L364 34 L360 34Z" fill="#fff"/>
  <path d="M363.5 22 L378.5 22 M363.5 25.5 L378.5 25.5 M363.5 29 L375 29" stroke="#333" stroke-width="1.3"/>
  <circle cx="381" cy="38" r="8.5" fill="#1a1a1a" stroke="#8a8a8a" stroke-width="1.5"/>
  <text x="381" y="43" font-family="Liberation Sans" font-size="13" fill="#fff" text-anchor="middle">3</text>
  <rect x="410" y="0" width="1" height="57" fill="#555"/>
</svg>

<!-- taskbar text -->
<div class="t" style="left:1711px;top:1043px;font-size:16px;color:#fff">ENG</div>
<div class="t" style="left:1768px;top:1031px;font-size:16px;color:#fff">5:55 PM</div>
<div class="t" style="left:1762px;top:1055px;font-size:16.5px;color:#fff">11/4/2024</div>

</body></html>
